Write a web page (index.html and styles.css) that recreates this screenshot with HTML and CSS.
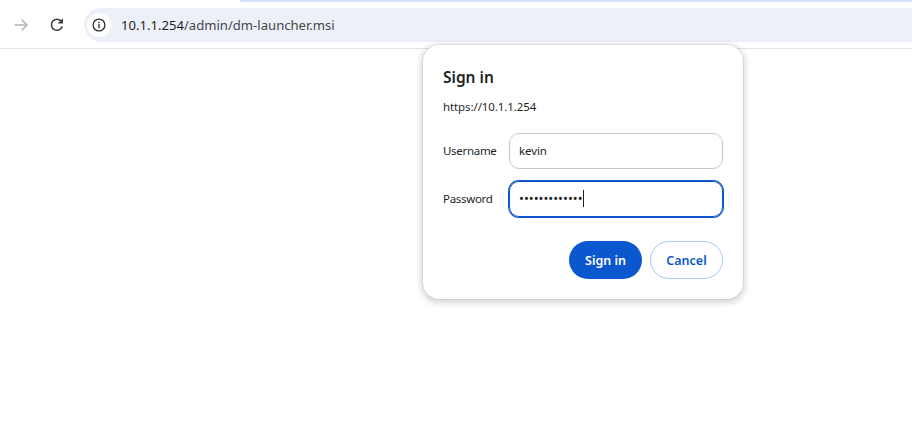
FILE: index.html
```html
<!DOCTYPE html>
<html lang="en">
<head>
<meta charset="utf-8">
<title>Sign in</title>
<link rel="stylesheet" href="styles.css">
</head>
<body>
<div class="tabstrip"><div class="tab-edge"></div></div>
<header class="toolbar">
  <button class="nav-btn forward" aria-label="Forward">
    <svg width="16" height="16" viewBox="0 0 16 16"><path d="M1.5 8H14M8.6 2.6 14 8l-5.4 5.4" fill="none" stroke="#b4b5b6" stroke-width="1.5"/></svg>
  </button>
  <button class="nav-btn reload" aria-label="Reload">
    <svg width="16" height="16" viewBox="0 0 16 16"><path d="M13.2 9.4A5.5 5.5 0 1 1 12.2 4.3" fill="none" stroke="#3c3d3f" stroke-width="1.6"/><path d="M14 1.2v5.4H8.6z" fill="#3c3d3f"/></svg>
  </button>
  <div class="omnibox">
    <span class="chip">
      <svg width="14" height="14" viewBox="0 0 14 14"><circle cx="7" cy="7" r="5.9" fill="none" stroke="#2a2b2d" stroke-width="1.3"/><rect x="6.3" y="6.1" width="1.4" height="4" fill="#2a2b2d"/><rect x="6.3" y="3.7" width="1.4" height="1.5" fill="#2a2b2d"/></svg>
    </span>
    <span class="url"><span class="host">10.1.1.254</span>/admin/dm-launcher.msi</span>
  </div>
</header>
<section class="dialog">
  <h1 class="title">Sign in</h1>
  <p class="origin">https://10.1.1.254</p>
  <div class="fields">
    <label class="field">
      <span class="label">Username</span>
      <span class="input">kevin</span>
    </label>
    <label class="field">
      <span class="label">Password</span>
      <span class="input focused"><span class="dots">•••••••••••••</span><span class="caret"></span></span>
    </label>
  </div>
  <div class="actions">
    <button class="btn primary">Sign in</button>
    <button class="btn secondary">Cancel</button>
  </div>
</section>
</body>
</html>
```
FILE: styles.css
```css
* { box-sizing: border-box; }
html, body { margin: 0; height: 100%; }
body {
  background: #fff;
  font-family: "Noto Sans", "Open Sans", sans-serif;
  color: #1f1f1f;
  overflow: hidden;
  position: relative;
}
button { font-family: inherit; }
.tabstrip {
  height: 2px;
  display: flex;
  justify-content: flex-end;
}
.tab-edge {
  width: 672px;
  height: 2px;
  background: #d3e3fd;
  border-bottom-left-radius: 4px;
}
.toolbar {
  height: 47px;
  border-bottom: 1px solid #e3e3e3;
  display: flex;
  align-items: flex-start;
  padding: 6px 0 0 12px;
}
.nav-btn {
  width: 18px;
  height: 34px;
  padding: 0;
  border: 0;
  background: none;
  display: flex;
  align-items: center;
  justify-content: center;
}
.forward { margin-right: 18px; }
.reload { margin-right: 18px; }
.omnibox {
  flex: 1;
  height: 34px;
  background: #ecf0f9;
  border-radius: 17px 0 0 17px;
  display: flex;
  align-items: center;
  padding-left: 3px;
}
.chip {
  width: 24px;
  height: 24px;
  border-radius: 50%;
  background: #fff;
  display: flex;
  align-items: center;
  justify-content: center;
  margin-right: 10px;
}
.url {
  font-size: 13.1px;
  color: #474747;
  white-space: nowrap;
}
.host { color: #1f1f1f; }
.dialog {
  position: absolute;
  left: 423px;
  top: 45px;
  width: 320px;
  height: 254px;
  background: #fff;
  border-radius: 16px;
  box-shadow: 0 0 0 1px rgba(0,0,0,.06), 0 2px 6px 2px rgba(0,0,0,.16);
  padding: 20px;
}
.title {
  margin: 0;
  font-size: 15.5px;
  font-weight: 600;
  line-height: 24px;
}
.origin {
  margin: 9px 0 0;
  font-size: 11.5px;
  letter-spacing: -0.1px;
  line-height: 18px;
}
.fields {
  margin-top: 17px;
  display: flex;
  flex-direction: column;
  gap: 12px;
}
.field {
  display: flex;
  align-items: center;
  justify-content: space-between;
}
.label {
  font-size: 11.5px;
  letter-spacing: -0.3px;
  padding-bottom: 2px;
}
.input {
  width: 214px;
  height: 36px;
  border: 1px solid #c7c7c7;
  border-radius: 10px;
  display: flex;
  align-items: center;
  padding: 0 0 2px 9px;
  font-size: 11.5px;
  letter-spacing: -0.1px;
}
.input.focused {
  border-color: #0b57d0;
  box-shadow: 0 0 0 1px #0b57d0;
}
.dots {
  font-size: 13px;
  letter-spacing: 0;
}
.caret {
  width: 1px;
  height: 17px;
  background: #1f1f1f;
}
.actions {
  margin-top: 24px;
  display: flex;
  justify-content: flex-end;
  gap: 8px;
}
.btn {
  width: 73px;
  height: 38px;
  border-radius: 19px;
  font-size: 12.5px;
  font-weight: 600;
  padding: 0;
}
.primary { background: #0b57d0; color: #fff; border: 0; }
.secondary { background: #fff; color: #0b57d0; border: 1px solid #a8c7fa; }
```
